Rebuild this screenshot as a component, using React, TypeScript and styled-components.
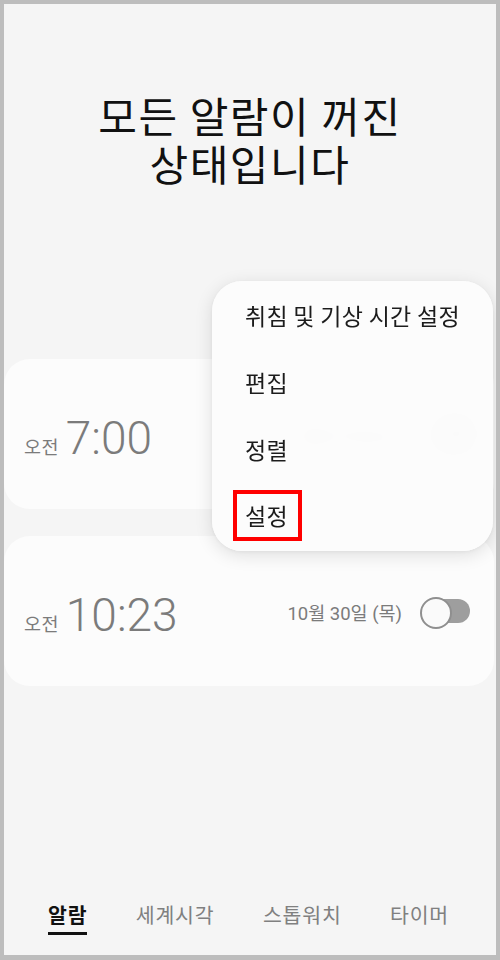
import styled, { createGlobalStyle } from "styled-components"

const GlobalStyle = createGlobalStyle`
  html, body {
    margin: 0;
    padding: 0;
    background: #bdbdbd;
  }
  body {
    font-family: "Roboto", "Noto Sans CJK KR", sans-serif;
    -webkit-font-smoothing: antialiased;
  }
  * {
    box-sizing: border-box;
  }
`

interface Alarm {
  id: number
  meridiem: string
  time: string
  date: string
  enabled: boolean
}

const alarms: Alarm[] = [
  { id: 1, meridiem: "오전", time: "7:00", date: "10월 31일 (금)", enabled: false },
  { id: 2, meridiem: "오전", time: "10:23", date: "10월 30일 (목)", enabled: false },
]

const menuItems = [
  { key: "bedtime", label: "취침 및 기상 시간 설정" },
  { key: "edit", label: "편집" },
  { key: "sort", label: "정렬" },
  { key: "settings", label: "설정", highlighted: true },
]

const tabs = [
  { key: "alarm", label: "알람" },
  { key: "world", label: "세계시각" },
  { key: "stopwatch", label: "스톱워치" },
  { key: "timer", label: "타이머" },
]

const App = () => {
  return (
    <>
      <GlobalStyle />
      <Screen>
        <Headline>
          모든 알람이 꺼진
          <br />
          상태입니다
        </Headline>

        <AlarmList>
          {alarms.map((alarm) => (
            <AlarmCard key={alarm.id}>
              <TimeGroup>
                <Meridiem>{alarm.meridiem}</Meridiem>
                <Clock>{alarm.time}</Clock>
              </TimeGroup>
              <Schedule>
                <DateLabel>{alarm.date}</DateLabel>
                <Toggle $on={alarm.enabled} aria-label="알람 켜기" />
              </Schedule>
            </AlarmCard>
          ))}
        </AlarmList>

        <Popup role="menu">
          {menuItems.map((item) => (
            <PopupItem key={item.key} role="menuitem">
              {item.highlighted ? <Marked>{item.label}</Marked> : item.label}
            </PopupItem>
          ))}
        </Popup>

        <TabBar>
          {tabs.map((tab, index) => (
            <Tab key={tab.key} $active={index === 0}>
              {tab.label}
            </Tab>
          ))}
        </TabBar>
      </Screen>
    </>
  )
}

const Screen = styled.div`
  position: relative;
  display: flex;
  flex-direction: column;
  width: 500px;
  height: 960px;
  border: 4px solid #bdbdbd;
  border-bottom-width: 5px;
  background-color: #f5f5f5;
  overflow: hidden;
`

const Headline = styled.h1`
  margin: 87px 0 0;
  font-family: "Noto Sans CJK KR", sans-serif;
  font-size: 42px;
  font-weight: 400;
  letter-spacing: 1.6px;
  line-height: 48px;
  text-align: center;
  color: #111111;
`

const AlarmList = styled.ul`
  display: flex;
  flex-direction: column;
  gap: 27px;
  margin: 172px 2px 0 0;
  padding: 0;
  list-style: none;
`

const AlarmCard = styled.li`
  display: flex;
  align-items: center;
  justify-content: space-between;
  height: 150px;
  padding: 8px 24px 0 20px;
  border-radius: 26px;
  background-color: #fcfcfc;
`

const TimeGroup = styled.div`
  display: flex;
  align-items: baseline;
  gap: 7px;
  color: #7b7b7b;
`

const Meridiem = styled.span`
  font-family: "Noto Sans CJK KR", sans-serif;
  font-size: 18.5px;
  letter-spacing: 0.4px;
`

const Clock = styled.span`
  font-family: "Roboto", sans-serif;
  font-size: 46px;
  font-weight: 300;
  line-height: 1;
`

const Schedule = styled.div`
  display: flex;
  align-items: center;
  gap: 18px;
  margin-top: -8px;
`

const DateLabel = styled.span`
  font-size: 18.5px;
  color: #7b7b7b;
  padding-top: 2px;
`

const Toggle = styled.button<{ $on: boolean }>`
  position: relative;
  width: 50px;
  height: 28px;
  padding: 0;
  border: none;
  background: transparent;
  cursor: pointer;
  &::before {
    content: "";
    position: absolute;
    top: 2px;
    left: 2px;
    right: 0;
    bottom: 2px;
    border-radius: 12px;
    background-color: ${(props) => (props.$on ? "#3e91ff" : "#9e9e9e")};
  }
  &::after {
    content: "";
    position: absolute;
    top: 0;
    left: ${(props) => (props.$on ? "22px" : "0")};
    width: 28px;
    height: 28px;
    border: 2px solid #8f8f8f;
    border-radius: 50%;
    background-color: #fafafa;
  }
`

const Popup = styled.ul`
  position: absolute;
  top: 277px;
  left: 208px;
  width: 281px;
  margin: 0;
  padding: 0 0 2px;
  list-style: none;
  border-radius: 30px;
  background-color: rgba(252, 252, 252, 0.95);
  backdrop-filter: blur(14px);
  box-shadow: 0 4px 18px rgba(0, 0, 0, 0.12), 0 1px 4px rgba(0, 0, 0, 0.05);
`

const PopupItem = styled.li`
  display: flex;
  align-items: center;
  height: 67px;
  padding-left: 33px;
  font-family: "Noto Sans CJK KR", sans-serif;
  font-size: 23px;
  letter-spacing: 0.3px;
  color: #1c1c1c;
`

const Marked = styled.span`
  margin-left: -12px;
  padding: 8px 10px 8px 8px;
  line-height: 27px;
  border: 4px solid #ff0000;
`

const TabBar = styled.nav`
  display: flex;
  justify-content: space-between;
  margin-top: auto;
  padding: 0 47px 20px 44px;
`

const Tab = styled.span<{ $active: boolean }>`
  padding-bottom: 6px;
  font-family: "Noto Sans CJK KR", sans-serif;
  font-size: 20.5px;
  letter-spacing: 0.8px;
  line-height: 24px;
  font-weight: ${(props) => (props.$active ? 700 : 400)};
  color: ${(props) => (props.$active ? "#111111" : "#808080")};
  border-bottom: 3px solid ${(props) => (props.$active ? "#111111" : "transparent")};
`

export default App
